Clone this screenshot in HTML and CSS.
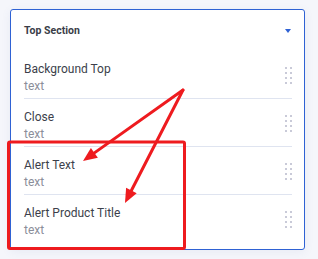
FILE: index.html
```html
<!DOCTYPE html>
<html lang="en">
<head>
    <meta charset="UTF-8">
    <meta name="viewport" content="width=device-width, initial-scale=1.0">
    <title>Top Section</title>
    <link rel="stylesheet" href="styles.css">
</head>
<body>
    <div class="panel">
        <div class="panel-header">
            <span class="panel-title">Top Section</span>
            <span class="caret"></span>
        </div>

        <div class="field-list">
            <div class="field">
                <div class="field-info">
                    <div class="field-name">Background Top</div>
                    <div class="field-type">text</div>
                </div>
                <div class="handle"><i></i><i></i><i></i><i></i><i></i><i></i><i></i><i></i></div>
            </div>
            <div class="field">
                <div class="field-info">
                    <div class="field-name">Close</div>
                    <div class="field-type">text</div>
                </div>
                <div class="handle"><i></i><i></i><i></i><i></i><i></i><i></i><i></i><i></i></div>
            </div>
            <div class="field">
                <div class="field-info">
                    <div class="field-name">Alert Text</div>
                    <div class="field-type">text</div>
                </div>
                <div class="handle"><i></i><i></i><i></i><i></i><i></i><i></i><i></i><i></i></div>
            </div>
            <div class="field">
                <div class="field-info">
                    <div class="field-name">Alert Product Title</div>
                    <div class="field-type">text</div>
                </div>
                <div class="handle"><i></i><i></i><i></i><i></i><i></i><i></i><i></i><i></i></div>
            </div>
        </div>
    </div>

    <!-- red annotation drawn over the screenshot -->
    <svg class="annotation" width="318" height="259" viewBox="0 0 318 259">
        <rect x="8.5" y="142" width="176" height="106.5" rx="1.5" fill="none" stroke="#ee1b1f" stroke-width="3"/>
        <line x1="183" y1="90" x2="94.4" y2="152.9" stroke="#ee1b1f" stroke-width="3" stroke-linecap="round"/>
        <polygon points="83,161 97.9,157.8 90.9,148" fill="#ee1b1f"/>
        <line x1="183" y1="90" x2="131.4" y2="190.5" stroke="#ee1b1f" stroke-width="3" stroke-linecap="round"/>
        <polygon points="125,203 136.7,193.2 126.1,187.8" fill="#ee1b1f"/>
    </svg>
</body>
</html>
```

FILE: styles.css
```css
/* Page */
body {
    margin: 0;
    padding: 9px 0 0 10px;
    width: 318px;
    height: 259px;
    box-sizing: border-box;
    background-color: #f5f6fb;
    font-family: 'Roboto', 'Noto Sans', sans-serif;
    position: relative;
    overflow: hidden;
}

/* Card */
.panel {
    width: 295px;
    box-sizing: border-box;
    background-color: #ffffff;
    border: 1px solid #2f62d4;
    border-radius: 3px;
    box-shadow: 0 2px 10px rgba(80, 100, 170, 0.08);
    padding-bottom: 7px;
}

.panel-header {
    display: flex;
    justify-content: space-between;
    align-items: center;
    padding: 14px 12px 13px 13px;
    height: 14px;
}

.panel-title {
    font-size: 10.5px;
    font-weight: 700;
    color: #3a3d48;
    line-height: 14px;
}

.caret {
    width: 0;
    height: 0;
    border-left: 3.5px solid transparent;
    border-right: 3.5px solid transparent;
    border-top: 4px solid #2f62d4;
    margin-right: 1px;
}

/* Rows */
.field {
    display: flex;
    justify-content: space-between;
    align-items: center;
    margin: 0 12px 0 13px;
    padding: 10px 0 4px;
    border-bottom: 1px solid #dfe4f0;
}

.field:last-child {
    border-bottom: none;
}

.field-name {
    font-size: 12px;
    line-height: 17px;
    color: #3c3f4b;
}

.field-type {
    font-size: 12px;
    line-height: 16px;
    color: #8b8e9a;
}

/* Drag handle */
.handle {
    display: grid;
    grid-template-columns: 2px 2px;
    grid-auto-rows: 2px;
    column-gap: 3px;
    row-gap: 3px;
    margin-top: -4px;
}

.handle i {
    display: block;
    width: 2px;
    height: 2px;
    background-color: #c9cad8;
}

/* Annotation overlay */
.annotation {
    position: absolute;
    left: 0;
    top: 0;
    pointer-events: none;
}
```
